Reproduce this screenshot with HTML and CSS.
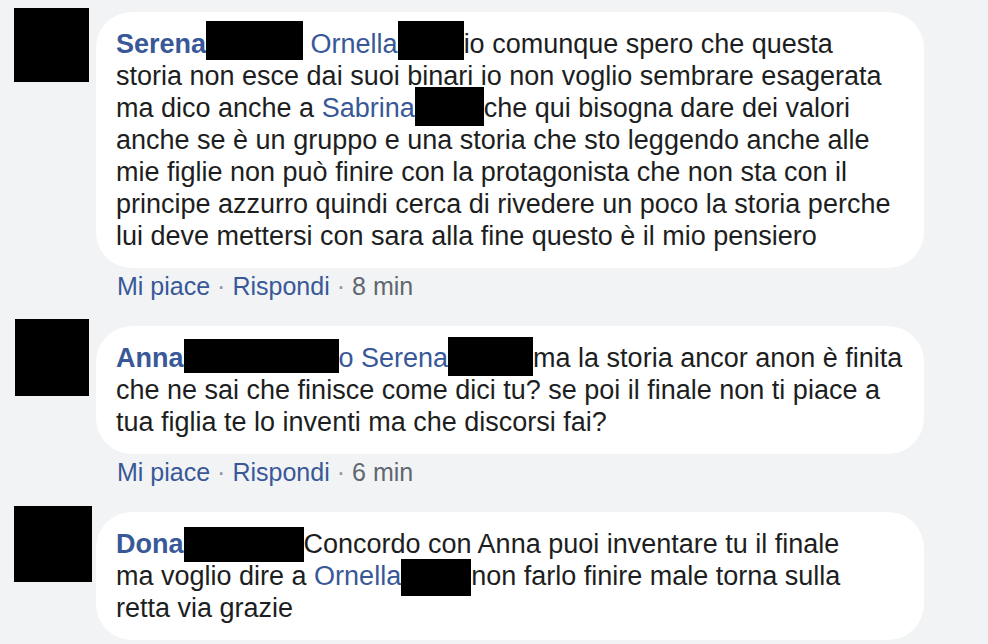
FILE: index.html
```html
<!DOCTYPE html>
<html>
<head>
	<link rel="stylesheet" href="styles.css">
</head>
<body>

	<div class="comments">

		<!-- comment 1 -->
		<div class="comment">
			<div class="avatar avatar-1"></div>
			<div class="comment-body">
				<div class="bubble">
					<a class="name">Serena</a><span class="redact r-c1a"></span> <a class="mention">Ornella</a><span class="redact r-c1b"></span>io comunque spero che questa<br>
					storia non esce dai suoi binari io non voglio sembrare esagerata<br>
					ma dico anche a <a class="mention">Sabrina</a><span class="redact r-c1c"></span>che qui bisogna dare dei valori<br>
					anche se è un gruppo e una storia che sto leggendo anche alle<br>
					mie figlie non può finire con la protagonista che non sta con il<br>
					principe azzurro quindi cerca di rivedere un poco la storia perche<br>
					lui deve mettersi con sara alla fine questo è il mio pensiero
				</div>
				<div class="meta">
					<a>Mi piace</a><span class="dot">·</span><a>Rispondi</a><span class="dot">·</span><span class="time">8 min</span>
				</div>
			</div>
		</div>

		<!-- comment 2 -->
		<div class="comment">
			<div class="avatar avatar-2"></div>
			<div class="comment-body">
				<div class="bubble">
					<a class="name">Anna</a><span class="redact r-c2a"></span><a class="mention">o Serena</a><span class="redact r-c2b"></span>ma la storia ancor anon è finita<br>
					che ne sai che finisce come dici tu? se poi il finale non ti piace a<br>
					tua figlia te lo inventi ma che discorsi fai?
				</div>
				<div class="meta">
					<a>Mi piace</a><span class="dot">·</span><a>Rispondi</a><span class="dot">·</span><span class="time">6 min</span>
				</div>
			</div>
		</div>

		<!-- comment 3 -->
		<div class="comment">
			<div class="avatar avatar-3"></div>
			<div class="comment-body">
				<div class="bubble">
					<a class="name">Dona</a><span class="redact r-c3a"></span>Concordo con Anna puoi inventare tu il finale<br>
					ma voglio dire a <a class="mention">Ornella</a><span class="redact r-c3b"></span>non farlo finire male torna sulla<br>
					retta via grazie
				</div>
			</div>
		</div>

	</div>

</body>
</html>
```

FILE: styles.css
```css
*, html, body{
	margin: 0;
	padding: 0;
}
html{
	background: #f2f3f5;
}
body{
	font-family: "Liberation Sans", Arial, sans-serif;
	color: #1c1e21;
}
.comments{
	padding-top: 12px;
}
.comment{
	display: grid;
	grid-template-columns: 96px 828px;
	align-items: start;
	margin-bottom: 24px;
}
.avatar{
	background: #000;
}
.avatar-1{
	width: 75px;
	height: 74px;
	margin: -4px 0 0 14px;
}
.avatar-2{
	width: 74px;
	height: 77px;
	margin: -7px 0 0 15px;
}
.avatar-3{
	width: 78px;
	height: 76px;
	margin: -6px 0 0 14px;
}
.bubble{
	background: #fff;
	border-radius: 36px;
	padding: 16px 20px;
	font-size: 27px;
	line-height: 32px;
	white-space: nowrap;
}
.name{
	color: #385898;
	font-weight: bold;
}
.mention{
	color: #385898;
}
.redact{
	display: inline-block;
	background: #000;
	margin: -14px 0 -6px;
}
/* sizes of the black boxes over the hidden names */
.r-c1a{ width: 97px;  height: 39px; vertical-align: -1px; }
.r-c1b{ width: 66px;  height: 39px; vertical-align: -1px; }
.r-c1c{ width: 69px;  height: 39px; vertical-align: -3px; }
.r-c2a{ width: 155px; height: 34px; vertical-align: 0px; }
.r-c2b{ width: 85px;  height: 39px; vertical-align: -3px; }
.r-c3a{ width: 120px; height: 35px; vertical-align: -3px; }
.r-c3b{ width: 70px;  height: 37px; vertical-align: -5px; }

.meta{
	margin-top: 2px;
	padding-left: 21px;
	font-size: 25px;
	line-height: 32px;
	color: #606770;
	white-space: nowrap;
}
.meta a{
	color: #385898;
}
.meta .dot{
	margin: 0 7px;
	color: #90949c;
}
```
